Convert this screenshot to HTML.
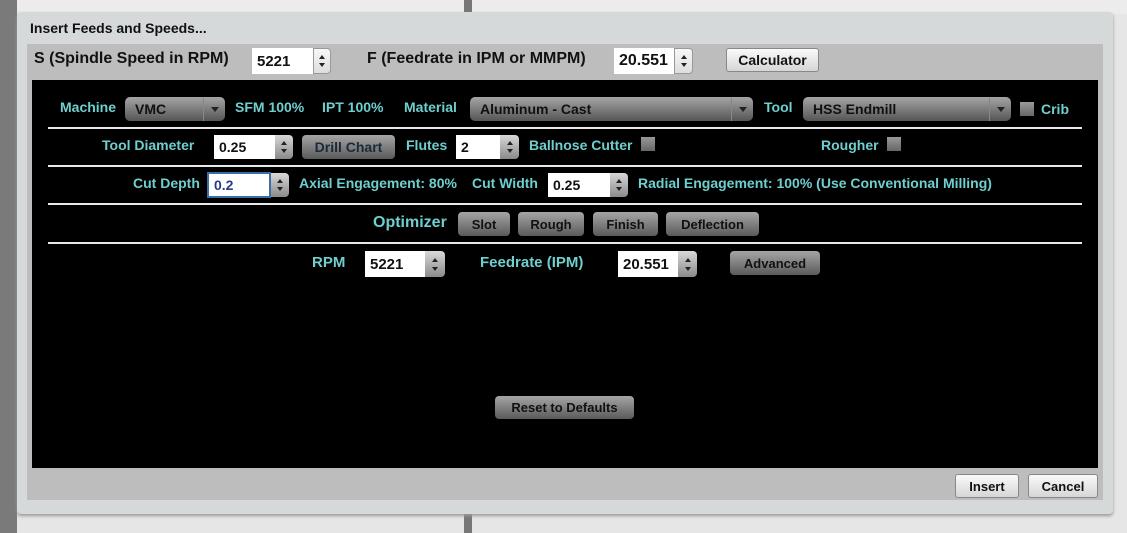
<!DOCTYPE html>
<html><head><meta charset="utf-8">
<style>
*{box-sizing:border-box;margin:0;padding:0}
body{width:1127px;height:533px;overflow:hidden;background:#e6e6e6;font-family:"Liberation Sans",sans-serif;font-weight:bold;position:relative}
.a{position:absolute}
.t{position:absolute;color:#6fcfcf;font-size:14px;white-space:nowrap;line-height:16px}
.k{position:absolute;color:#111;font-size:14px;white-space:nowrap;line-height:16px}
.in{position:absolute;background:#fff;color:#111;font-size:14px;padding-left:5px;display:flex;align-items:center}
.sp{position:absolute;background:linear-gradient(#d8d8d8,#8a8a8a);border-radius:0 4px 4px 0}
.sp:before{content:"";position:absolute;left:50%;top:25%;margin-left:-3px;border:3px solid transparent;border-bottom:4px solid #222;border-top:0}
.sp:after{content:"";position:absolute;left:50%;bottom:25%;margin-left:-3px;border:3px solid transparent;border-top:4px solid #222;border-bottom:0}
.spl{background:linear-gradient(#f8f8f8,#ddd);border:1px solid #999}
.db{position:absolute;background:linear-gradient(#a5a5a5,#5a5a5a);border-radius:4px;color:#111;font-size:13px;display:flex;align-items:center;justify-content:center}
.sel{position:absolute;background:linear-gradient(#a5a5a5,#555);border-radius:5px;color:#111;font-size:14px;padding-left:10px;display:flex;align-items:center}
.sel i{position:absolute;right:0;top:0;bottom:0;width:22px;border-left:1px solid #888}
.sel i:after{content:"";position:absolute;left:7px;top:10px;border:4px solid transparent;border-top:5px solid #222;border-bottom:0}
.lb{position:absolute;background:linear-gradient(#fafafa,#d6d6d6);border:1px solid #888;border-radius:3px;color:#111;font-size:13px;display:flex;align-items:center;justify-content:center}
.cb{position:absolute;width:14px;height:14px;background:linear-gradient(#999,#666)}
.hr{position:absolute;left:48px;width:1034px;height:2px;background:#e8e8e8}
</style></head><body>
<div class="a" style="left:0;top:0;width:17px;height:533px;background:#7a7a7a"></div>
<div class="a" style="left:17px;top:0;width:1110px;height:14px;background:#ececec"></div>
<div class="a" style="left:464px;top:0;width:8px;height:533px;background:#777"></div>
<div class="a" style="left:17px;top:12px;width:1096px;height:502px;background:#d6d9d9;border-radius:4px;box-shadow:0 2px 3px #999"></div>
<div class="k" style="left:30px;top:20px;font-size:14px">Insert Feeds and Speeds...</div>
<div class="a" style="left:27px;top:44px;width:1076px;height:456px;background:#bdbdbd"></div>
<div class="k" style="left:34px;top:51px;font-size:16px">S (Spindle Speed in RPM)</div>
<div class="in" style="left:252px;top:48px;width:61px;height:26px;font-size:15px">5221</div>
<div class="sp spl" style="left:313px;top:48px;width:18px;height:26px"></div>
<div class="k" style="left:367px;top:51px;font-size:16px">F (Feedrate in IPM or MMPM)</div>
<div class="in" style="left:614px;top:48px;width:60px;height:26px;font-size:16px">20.551</div>
<div class="sp spl" style="left:674px;top:48px;width:19px;height:26px"></div>
<div class="lb" style="left:726px;top:48px;width:93px;height:24px;font-size:14px">Calculator</div>
<div class="a" style="left:32px;top:80px;width:1066px;height:388px;background:#000"></div>

<div class="t" style="left:60px;top:99px">Machine</div>
<div class="sel" style="left:125px;top:97px;width:100px;height:24px">VMC<i></i></div>
<div class="t" style="left:235px;top:99px">SFM 100%</div>
<div class="t" style="left:322px;top:99px">IPT 100%</div>
<div class="t" style="left:404px;top:99px">Material</div>
<div class="sel" style="left:470px;top:97px;width:283px;height:24px">Aluminum - Cast<i></i></div>
<div class="t" style="left:764px;top:99px">Tool</div>
<div class="sel" style="left:803px;top:97px;width:208px;height:24px">HSS Endmill<i></i></div>
<div class="cb" style="left:1020px;top:102px"></div>
<div class="t" style="left:1041px;top:101px">Crib</div>
<div class="hr" style="top:127px"></div>

<div class="t" style="left:102px;top:137px">Tool Diameter</div>
<div class="in" style="left:214px;top:135px;width:61px;height:24px">0.25</div>
<div class="sp" style="left:275px;top:135px;width:18px;height:24px"></div>
<div class="db" style="left:302px;top:135px;width:93px;height:24px;color:#1a2a3a;font-size:14px">Drill Chart</div>
<div class="t" style="left:406px;top:137px">Flutes</div>
<div class="in" style="left:456px;top:135px;width:44px;height:24px">2</div>
<div class="sp" style="left:500px;top:135px;width:19px;height:24px"></div>
<div class="t" style="left:529px;top:137px">Ballnose Cutter</div>
<div class="cb" style="left:641px;top:137px"></div>
<div class="t" style="left:821px;top:137px">Rougher</div>
<div class="cb" style="left:887px;top:137px"></div>
<div class="hr" style="top:165px"></div>

<div class="t" style="left:133px;top:175px">Cut Depth</div>
<div class="in" style="left:207px;top:172px;width:64px;height:26px;border:2px solid #3b6ea8;color:#2a3a8a">0.2</div>
<div class="sp" style="left:271px;top:173px;width:18px;height:24px"></div>
<div class="t" style="left:299px;top:175px">Axial Engagement: 80%</div>
<div class="t" style="left:472px;top:175px">Cut Width</div>
<div class="in" style="left:548px;top:173px;width:62px;height:24px">0.25</div>
<div class="sp" style="left:610px;top:173px;width:18px;height:24px"></div>
<div class="t" style="left:638px;top:175px">Radial Engagement: 100% (Use Conventional Milling)</div>
<div class="hr" style="top:203px"></div>

<div class="t" style="left:373px;top:215px;font-size:16px">Optimizer</div>
<div class="db" style="left:458px;top:212px;width:52px;height:24px">Slot</div>
<div class="db" style="left:518px;top:212px;width:66px;height:24px">Rough</div>
<div class="db" style="left:593px;top:212px;width:65px;height:24px">Finish</div>
<div class="db" style="left:666px;top:212px;width:93px;height:24px">Deflection</div>
<div class="hr" style="top:242px"></div>

<div class="t" style="left:312px;top:255px;font-size:15px">RPM</div>
<div class="in" style="left:365px;top:251px;width:60px;height:26px;font-size:15px">5221</div>
<div class="sp" style="left:425px;top:251px;width:20px;height:26px"></div>
<div class="t" style="left:480px;top:255px;font-size:15px">Feedrate (IPM)</div>
<div class="in" style="left:618px;top:251px;width:60px;height:26px;font-size:15px">20.551</div>
<div class="sp" style="left:678px;top:251px;width:19px;height:26px"></div>
<div class="db" style="left:730px;top:251px;width:90px;height:24px">Advanced</div>

<div class="db" style="left:495px;top:396px;width:139px;height:23px">Reset to Defaults</div>

<div class="lb" style="left:955px;top:474px;width:64px;height:24px">Insert</div>
<div class="lb" style="left:1028px;top:474px;width:70px;height:24px">Cancel</div>
</body></html>
